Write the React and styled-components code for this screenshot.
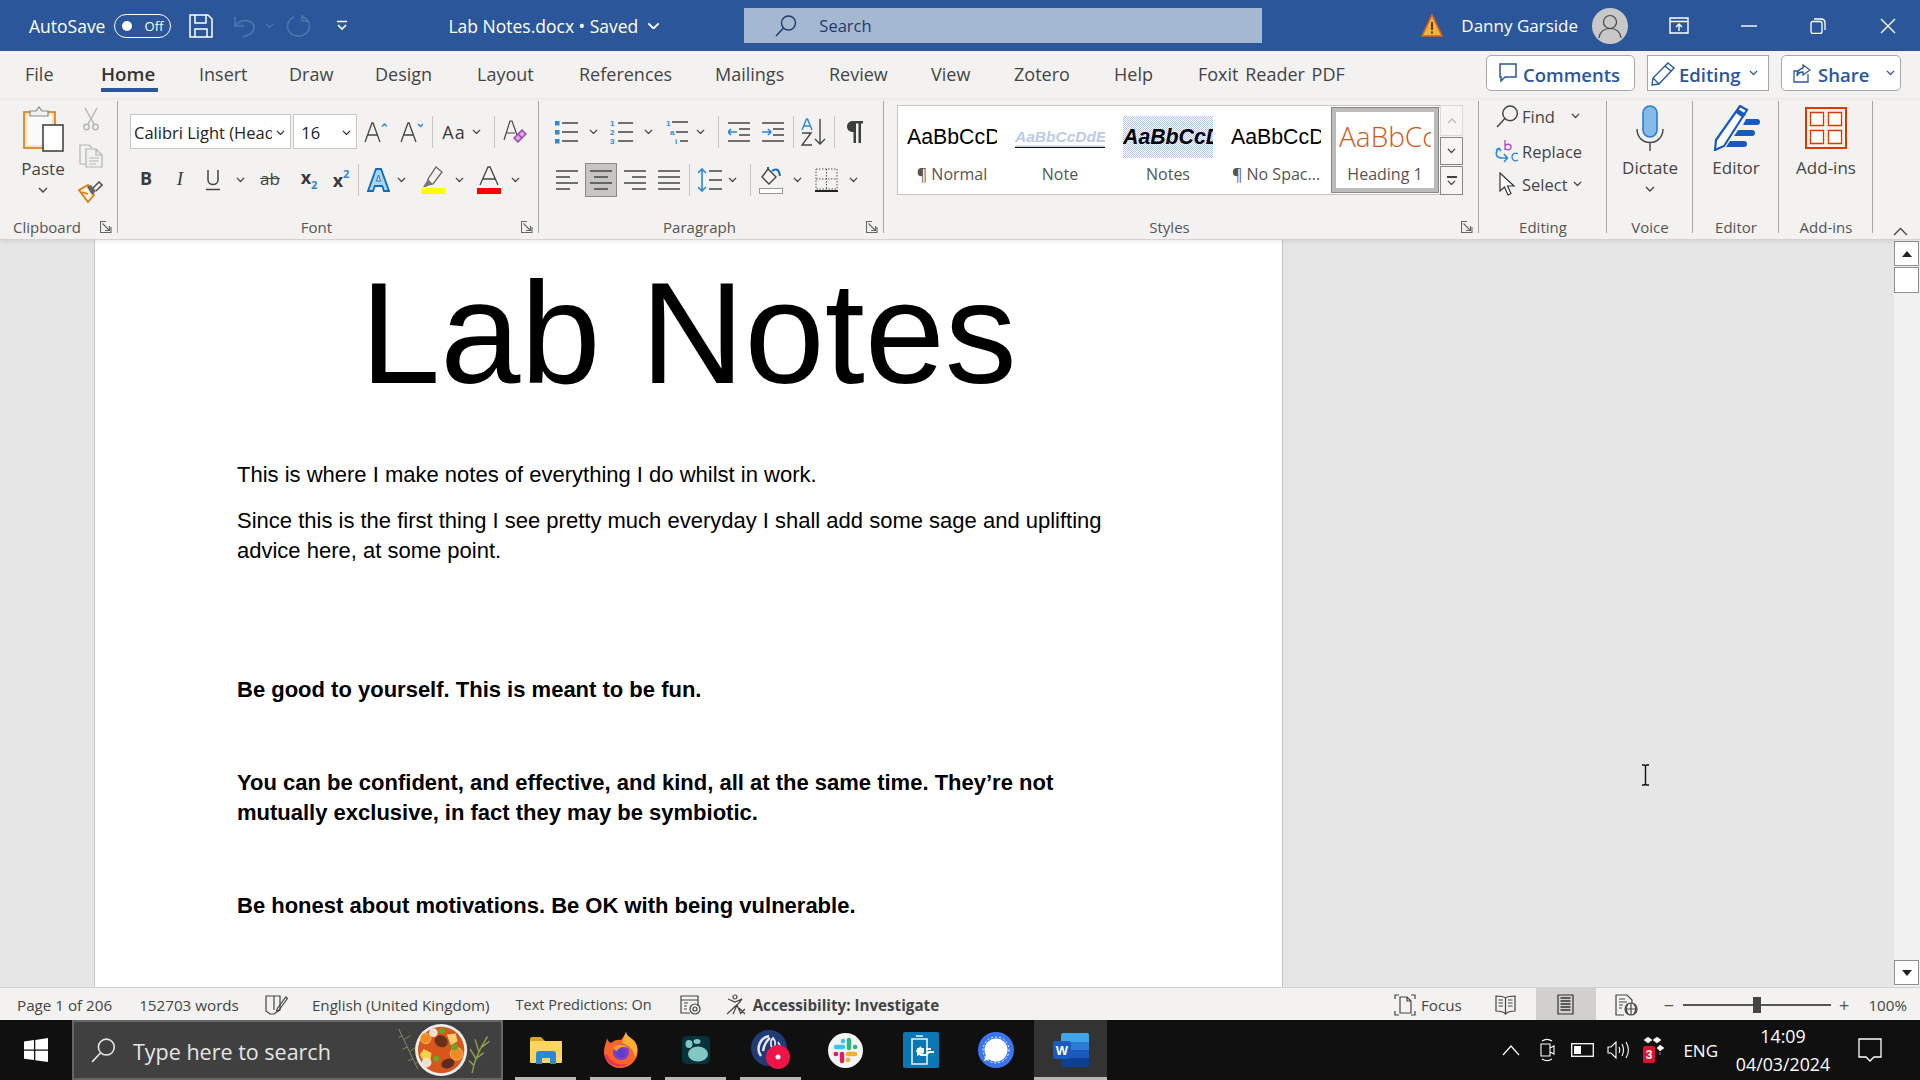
import React from "react";
import styled, { createGlobalStyle } from "styled-components";

const UI_FONT = `"Open Sans", "Noto Sans", sans-serif`;
const DOC_FONT = `"Liberation Sans", Arial, sans-serif`;
const BLUE = "#2b579a";
const INK = "#444";
const SKY = "#2b88d8";

const GlobalStyle = createGlobalStyle`
  html, body { margin: 0; padding: 0; height: 100%; overflow: hidden; }
  body { font-family: ${UI_FONT}; background: #101010; }
  svg { display: block; }
`;

/* ---------- icons ---------- */

const Chev = ({ c = "#444", w = 10 }) => (
  <svg width={w} height={w * 0.6} viewBox="0 0 10 6" fill="none" stroke={c} strokeWidth="1.4">
    <path d="M1 1l4 4 4-4" />
  </svg>
);

const SaveIcon = () => (
  <svg width="24" height="24" viewBox="0 0 24 24" fill="none" stroke="#fff" strokeWidth="1.5">
    <path d="M1 1h18l4 4v18H1z" />
    <path d="M6 1v8h11V1M6 23v-8h12v8" />
  </svg>
);
const UndoIcon = () => (
  <svg width="23" height="24" viewBox="0 0 23 24" fill="none" stroke="#4f76ad" strokeWidth="1.6">
    <path d="M2 3v9h9M2 12c6-8 19-7 19 2 0 4-4 7-11 9" />
  </svg>
);
const RedoIcon = () => (
  <svg width="25" height="24" viewBox="0 0 25 24" fill="none" stroke="#4f76ad" strokeWidth="1.6">
    <path d="M9 3a11 10 0 1 0 9 0M17 1v6h6" />
  </svg>
);
const QatIcon = () => (
  <svg width="12" height="11" viewBox="0 0 12 11" fill="none" stroke="#fff" strokeWidth="1.6">
    <path d="M1 1.5h10M2 5l4 4 4-4" />
  </svg>
);
const Magnifier = ({ c = "#1d3a6a", s = 22 }) => (
  <svg width={s} height={s} viewBox="0 0 22 22" fill="none" stroke={c} strokeWidth="1.4">
    <circle cx="13.5" cy="8" r="7" />
    <path d="M8.5 13L1 21" />
  </svg>
);
const WarnIcon = () => (
  <svg width="22" height="23" viewBox="0 0 22 23">
    <path d="M11 1l10 21H1z" fill="#f6b13c" stroke="#d9631e" strokeWidth="1.6" />
    <path d="M10 8h2v8h-2zM10 17.5h2v2h-2z" fill="#5a3a10" />
  </svg>
);
const AvatarIcon = () => (
  <svg width="36" height="36" viewBox="0 0 36 36" fill="none">
    <circle cx="18" cy="18" r="18" fill="#c8c8c8" />
    <circle cx="18" cy="14" r="6.5" stroke="#444" strokeWidth="1.2" />
    <path d="M7 30c1-7 5-9.5 11-9.5S28 23 29 30" stroke="#444" strokeWidth="1.2" />
  </svg>
);
const RibbonDisplayIcon = () => (
  <svg width="20" height="17" viewBox="0 0 20 17" fill="none" stroke="#fff" strokeWidth="1.4">
    <path d="M1 1h18v15H1zM1 4.5h18M10 14V7.5M7 10l3-3 3 3" />
  </svg>
);
const MinIcon = () => <svg width="16" height="2" viewBox="0 0 16 2"><path d="M0 1h16" stroke="#fff" strokeWidth="1.4" /></svg>;
const RestoreIcon = () => (
  <svg width="16" height="16" viewBox="0 0 16 16" fill="none" stroke="#fff" strokeWidth="1.3">
    <rect x="1" y="3.5" width="11" height="12" rx="2" />
    <path d="M4 1h7c3 0 4 1 4 4v7" />
  </svg>
);
const CloseIcon = () => (
  <svg width="16" height="16" viewBox="0 0 16 16" stroke="#fff" strokeWidth="1.4"><path d="M1 1l14 14M15 1L1 15" /></svg>
);
const CommentIcon = () => (
  <svg width="18" height="20" viewBox="0 0 18 20" fill="none" stroke={BLUE} strokeWidth="1.5">
    <path d="M1 1h16v13H6l-4 4v-4H1z" />
  </svg>
);
const PencilIcon = () => (
  <svg width="25" height="25" viewBox="0 0 25 25" fill="none" stroke={BLUE} strokeWidth="1.4">
    <path d="M17 2l6 5L8 23l-7 1 1-7zM14 5l6 5M2 17l6 6" />
  </svg>
);
const ShareIcon = () => (
  <svg width="18" height="20" viewBox="0 0 18 20" fill="none" stroke={BLUE} strokeWidth="1.3">
    <path d="M15 11v8H1V8h5M10 2l7 5-7 5V9c-3 0-5 1-6 4 0-5 2-7 6-8z" />
  </svg>
);

const PasteIcon = () => (
  <svg width="41" height="46" viewBox="0 0 41 46">
    <rect x="1" y="6" width="31" height="36" fill="#fbe6b8" stroke="#d97a17" strokeWidth="1.6" />
    <rect x="4" y="9" width="25" height="30" fill="#fafafa" />
    <path d="M7 10V5h6l3-4 3 4h6v5z" fill="#f3f2f1" stroke="#888" strokeWidth="1.2" />
    <rect x="20" y="19" width="20" height="26" fill="#fff" stroke="#444" strokeWidth="1.6" />
  </svg>
);
const CutIcon = () => (
  <svg width="16" height="24" viewBox="0 0 16 24" fill="none" stroke="#b3b3b3" strokeWidth="1.4">
    <path d="M2 1l9 16M14 1L5 17" />
    <circle cx="3.5" cy="20" r="2.7" />
    <circle cx="12.5" cy="20" r="2.7" />
  </svg>
);
const CopyIcon = () => (
  <svg width="24" height="24" viewBox="0 0 24 24" fill="none" stroke="#b3b3b3" strokeWidth="1.2">
    <path d="M7 20H1V1h9l3 3" />
    <path d="M7 5h10l6 6v12H7zM17 5v6h6M10 14h10M10 17h10M10 20h7" />
  </svg>
);
const PainterIcon = () => (
  <svg width="25" height="22" viewBox="0 0 25 22" fill="none">
    <path d="M1 9l9-5 6 10-6 7z" fill="#fff3dc" stroke="#d97a17" strokeWidth="1.8" />
    <path d="M9 6l5 8 4-4-5-6z" fill="#666" />
    <path d="M15 7l6-6 3 3-6 6" stroke="#555" strokeWidth="1.6" />
    <path d="M4 11l6 2" stroke="#d97a17" strokeWidth="1.4" />
  </svg>
);
const GrowIcon = ({ down }) => (
  <svg width="23" height="22" viewBox="0 0 23 22" fill="none">
    <path d="M1 21L8 2h1l7 19M4 14h10" stroke={INK} strokeWidth="1.3" />
    <path d={down ? "M18 3l2.5 2.5L23 3" : "M18 5.5L20.5 3 23 5.5"} stroke={SKY} strokeWidth="1.4" />
  </svg>
);
const ClearIcon = () => (
  <svg width="24" height="26" viewBox="0 0 24 26" fill="none">
    <path d="M1 21L7 2h2l5 14M4 14h8" stroke={INK} strokeWidth="1.2" />
    <path d="M11 19l8-8 4 4-8 8z" fill="#d6a6dc" stroke="#9c3fb0" strokeWidth="1.4" />
    <path d="M15 15l4 4" stroke="#9c3fb0" strokeWidth="1.2" />
  </svg>
);
const UnderlineGlyph = () => (
  <svg width="14" height="22" viewBox="0 0 14 22" fill="none" stroke={INK} strokeWidth="1.5">
    <path d="M2 1v10c0 6 10 6 10 0V1M0 20.5h14" />
  </svg>
);
const FillA = () => (
  <svg width="23" height="26" viewBox="0 0 23 26">
    <path d="M9 2h5l8 22h-5l-1.8-5H7.8L6 24H1z" fill="#a9d4f5" stroke="#0f6cbd" strokeWidth="1.8" />
    <path d="M11.5 8l-2 6h4z" fill="#fff" stroke="#0f6cbd" strokeWidth="1" />
  </svg>
);
const HighlightIcon = () => (
  <svg width="24" height="28" viewBox="0 0 24 28">
    <path d="M15 1l6 5-9 12-5 1 0-6z" fill="none" stroke="#666" strokeWidth="1.3" />
    <path d="M7 13l5 5-4 1-3 2H2z" fill="#777" />
    <rect x="0" y="22" width="24" height="6" fill="#ffff00" />
  </svg>
);
const ColorA = () => (
  <svg width="24" height="28" viewBox="0 0 24 28" fill="none">
    <path d="M3 19L11 1h2l8 18M6 13h12" stroke={INK} strokeWidth="1.3" />
    <rect x="0" y="22" width="24" height="6" fill="#f00" />
  </svg>
);
const BulletsIcon = () => (
  <svg width="23" height="24" viewBox="0 0 23 24">
    <path d="M7 3h16M7 12h16M7 21h16" stroke={INK} strokeWidth="1.5" />
    <path d="M0 1h4.5v4.5H0zM0 10h4.5v4.5H0zM0 19h4.5v4.5H0z" fill={SKY} />
  </svg>
);
const TinyBlue = styled.text`
  font: 700 8px ${DOC_FONT};
  fill: ${SKY};
`;
const NumberingIcon = () => (
  <svg width="23" height="26" viewBox="0 0 23 26">
    <path d="M8 4h15M8 13h15M8 22h15" stroke={INK} strokeWidth="1.5" />
    <TinyBlue x="0" y="7">1</TinyBlue>
    <TinyBlue x="0" y="16">2</TinyBlue>
    <TinyBlue x="0" y="25">3</TinyBlue>
  </svg>
);
const MultilevelIcon = () => (
  <svg width="23" height="26" viewBox="0 0 23 26">
    <path d="M6 3h16M10 13h12M14 22h8" stroke={INK} strokeWidth="1.5" />
    <TinyBlue x="0" y="7">1</TinyBlue>
    <TinyBlue x="4" y="16">a</TinyBlue>
    <TinyBlue x="9" y="25">i</TinyBlue>
  </svg>
);
const IndentIcon = ({ inc }) => (
  <svg width="22" height="22" viewBox="0 0 22 22" fill="none">
    <path d="M0 2h22M11 8h11M11 14h11M0 20h22" stroke={INK} strokeWidth="1.5" />
    <path d={inc ? "M0 11h9M6 8l3 3-3 3" : "M9 11H0M3 8l-3 3 3 3"} stroke={SKY} strokeWidth="1.6" />
  </svg>
);
const SortIcon = () => (
  <svg width="26" height="28" viewBox="0 0 26 28" fill="none">
    <path d="M1 12L5.5 1h1L11 12M3 8h6" stroke={SKY} strokeWidth="1.4" />
    <path d="M1 15h9L1 27h10" stroke={INK} strokeWidth="1.4" />
    <path d="M19 1v25M14 21l5 5 5-5" stroke={INK} strokeWidth="1.4" />
  </svg>
);
const PilcrowIcon = () => (
  <svg width="16" height="24" viewBox="0 0 16 24">
    <path d="M6 1h10v2.5h-2V23h-2.5V3.5H9V23H6.5V12C2 12 0 9.500 0 6.500S2 1 6 1z" fill="#3d3d3d" />
  </svg>
);
const AlignIcon = ({ kind }) => {
  const rows = {
    left: ["M0 2h22", "M0 8h14", "M0 14h22", "M0 20h14"],
    center: ["M0 2h22", "M4 8h14", "M0 14h22", "M4 20h14"],
    right: ["M0 2h22", "M8 8h14", "M0 14h22", "M8 20h14"],
    justify: ["M0 2h22", "M0 8h22", "M0 14h22", "M0 20h22"],
  }[kind];
  return (
    <svg width="22" height="22" viewBox="0 0 22 22" fill="none" stroke={INK} strokeWidth="1.5">
      <path d={rows.join("")} />
    </svg>
  );
};
const SpacingIcon = () => (
  <svg width="24" height="24" viewBox="0 0 24 24" fill="none">
    <path d="M4 1v22M0 5l4-4 4 4M0 19l4 4 4-4" stroke={SKY} strokeWidth="1.6" />
    <path d="M11 3h13M11 12h13M11 21h13" stroke={INK} strokeWidth="1.5" />
  </svg>
);
const ShadingIcon = () => (
  <svg width="24" height="28" viewBox="0 0 24 28" fill="none">
    <path d="M9 3l8 8-7 7-7-7z" stroke={INK} strokeWidth="1.4" />
    <path d="M9 3V1M13 5c4-3 7-2 8 5" stroke="#0f6cbd" strokeWidth="2" />
    <rect x="0.500" y="22.500" width="23" height="5" fill="#fff" stroke="#999" />
  </svg>
);
const BordersIcon = () => (
  <svg width="23" height="24" viewBox="0 0 23 24" fill="none">
    <path d="M1 1h21v20H1zM11.500 1v20M1 11h21" stroke="#555" strokeWidth="1" strokeDasharray="1.500 1.500" />
    <path d="M0 23h23" stroke="#222" strokeWidth="2" />
  </svg>
);
const LauncherIcon = () => (
  <svg width="12" height="12" viewBox="0 0 12 12" fill="none" stroke="#666" strokeWidth="1.1">
    <path d="M11 6v5.500H0.500V0.500H6M2.500 2.500l7 7M5 9.500h4.500V5" />
  </svg>
);
const ReplaceIcon = () => (
  <svg width="24" height="24" viewBox="0 0 24 24" fill="none">
    <path d="M4 9c-4 4-4 9 2 10h6M9 15l3.500 4L9 23M4 9l2 3M4 9L1 11" stroke={SKY} strokeWidth="1.5" />
    <path d="M10 1v10M10 7c2-3 6-2 6 1s-4 4-6 1" stroke="#b146c2" strokeWidth="1.3" />
    <path d="M23 15c-3-2-6 0-6 3s3 5 6 3" stroke={SKY} strokeWidth="1.4" />
  </svg>
);
const CursorIcon = () => (
  <svg width="17" height="24" viewBox="0 0 17 24">
    <path d="M1 1l0 18 4.500-4 3.500 8 3-1.500-3.500-7.500H15z" fill="#fff" stroke="#333" strokeWidth="1.2" />
  </svg>
);
const MicIcon = () => (
  <svg width="28" height="46" viewBox="0 0 28 46" fill="none">
    <rect x="7" y="1" width="14" height="31" rx="7" fill="#84bbe9" stroke="#2b7cd3" strokeWidth="1.6" />
    <path d="M1 24c0 18 26 18 26 0M14 37v9" stroke="#444" strokeWidth="1.4" />
  </svg>
);
const EditorIcon = () => (
  <svg width="47" height="46" viewBox="0 0 47 46">
    <path d="M27 1l7 4-23 36-9 4 1-10z" fill="#fff" stroke="#185abd" strokeWidth="2.2" />
    <path d="M25 4l8 5-3 4-7-5z" fill="#185abd" />
    <path d="M33 14h11a3 3 0 0 1 0 6H30zM25 25h14a3 3 0 0 1 0 6H21zM17 36h14a3 3 0 0 1 0 6H13z" fill="#185abd" />
  </svg>
);
const AddinsIcon = () => (
  <svg width="42" height="42" viewBox="0 0 42 42" fill="none">
    <rect x="1" y="1" width="40" height="40" fill="#fdf1ec" stroke="#d83b01" strokeWidth="2" />
    <path d="M5.500 5.500h13v13h-13zM23.500 5.500h13v13h-13zM5.500 23.500h13v13h-13zM23.500 23.500h13v13h-13z" fill="#fff" stroke="#d83b01" strokeWidth="1.3" />
  </svg>
);
const CaretUp = () => (
  <svg width="15" height="9" viewBox="0 0 15 9" fill="none" stroke="#444" strokeWidth="1.3"><path d="M1 8l6.500-6.500L14 8" /></svg>
);
const IBeam = () => (
  <svg width="9" height="22" viewBox="0 0 9 22" fill="none" stroke="#111" strokeWidth="1.4">
    <path d="M1 1h2.500l1 1 1-1H8M4.500 2v18M1 21h2.500l1-1 1 1H8" />
  </svg>
);

const ProofIcon = () => (
  <svg width="23" height="20" viewBox="0 0 23 20" fill="none" stroke="#444" strokeWidth="1.2">
    <path d="M1 1h14v14l-6 4H5l-4-3zM9 1v14" />
    <path d="M21 2l1.500 1.500L14 15l-2.500 1 .8-2.500z" />
  </svg>
);
const PredictIcon = () => (
  <svg width="23" height="20" viewBox="0 0 23 20" fill="none" stroke="#444" strokeWidth="1.2">
    <path d="M19 11V1H2v17h9M2 5h17M5 8h4M5 11h3M5 14h3" />
    <circle cx="16" cy="14" r="5" />
    <circle cx="16" cy="14" r="2" />
  </svg>
);
const AccessIcon = () => (
  <svg width="21" height="21" viewBox="0 0 21 21" fill="none" stroke="#444" strokeWidth="1.2">
    <circle cx="9" cy="3" r="2" />
    <path d="M2 5l7 3 7-3-5 6 4 9M11 11l-4 9M1 20L14 8M13 14l6 6M19 15l-5 5" />
  </svg>
);
const FocusIcon = () => (
  <svg width="22" height="22" viewBox="0 0 22 22" fill="none" stroke="#444" strokeWidth="1.2">
    <path d="M1 5V1h4M17 1h4v4M21 17v4h-4M5 21H1v-4M6 3h7l4 4v12H6zM13 3v4h4" />
  </svg>
);
const ReadIcon = () => (
  <svg width="21" height="20" viewBox="0 0 21 20" fill="none" stroke="#444" strokeWidth="1.2">
    <path d="M10.500 3C8 1 4 1 1 1v15c3 0 7 0 9.500 3 2.500-3 6.500-3 9.500-3V1c-3 0-7 0-9.500 2zM10.500 3v16M3.500 5h4.500M3.500 8h4.500M3.500 11h4.500M13 5h4.500M13 8h4.500M13 11h4.500" />
  </svg>
);
const PrintIcon = () => (
  <svg width="17" height="21" viewBox="0 0 17 21" fill="none" stroke="#333" strokeWidth="1.2">
    <path d="M1 1h15v19H1z" />
    <path d="M3.500 4h10M3.500 7h10M3.500 10h10M3.500 13h10M3.500 16h10" strokeWidth="1.5" />
  </svg>
);
const WebIcon = () => (
  <svg width="23" height="22" viewBox="0 0 23 22" fill="none" stroke="#444" strokeWidth="1.2">
    <path d="M9 21H1V1h11l5 5v3M4 5h6M4 8h8M4 11h4M4 14h3" />
    <circle cx="16" cy="15" r="6" />
    <path d="M10 15h12M16 9v12M13 10c-2 3-2 7 0 10M19 10c2 3 2 7 0 10" />
  </svg>
);

/* taskbar drawings */
const WindowsLogo = () => (
  <svg width="24" height="24" viewBox="0 0 24 24" fill="#fff">
    <path d="M0 3.500l10-1.400V11.500H0zM11.300 1.900L24 0v11.500H11.300zM0 12.800h10v9.300L0 20.700zM11.300 12.800H24V24l-12.700-1.800z" />
  </svg>
);
const StewArt = () => (
  <svg width="100" height="56" viewBox="0 0 100 58" fill="none">
    <g stroke="#8a8a5e" strokeWidth="1">
      <path d="M2 7l20 42M6 14l-4 2M8 18l6-4M11 26l-5 2M14 30l6-4M17 38l-5 2M19 43l6-3" />
    </g>
    <g stroke="#9aa24c" strokeWidth="1.400">
      <path d="M78 53c2-12 6-22 16-38M82 38l-6-10M82 38l8-6M85 30l-4-12M88 26l8-6M80 45l-5-5" />
    </g>
    <circle cx="46" cy="29" r="27" fill="#eee" />
    <circle cx="46" cy="29" r="24" fill="#d6561b" />
    <ellipse cx="46" cy="20" rx="7" ry="6" fill="#6b2d1e" transform="rotate(30 46 20)" />
    <ellipse cx="53" cy="43" rx="7" ry="5" fill="#5c2a20" transform="rotate(-20 53 43)" />
    <circle cx="30" cy="17" r="5.500" fill="#f08a24" stroke="#f7b55e" />
    <circle cx="62" cy="33" r="6.500" fill="#f08a24" stroke="#f7b55e" />
    <path d="M28 28l8 4-1 7-8 0-3-5z" fill="#f6d24c" />
    <path d="M52 13l9-1 2 8-7 4z" fill="#f4cf70" />
    <circle cx="38" cy="11" r="4.500" fill="#ece2d2" />
    <circle cx="31" cy="42" r="5" fill="#ece2d2" />
    <circle cx="47" cy="9" r="3" fill="#6da52b" />
    <circle cx="60" cy="26" r="3.500" fill="#6da52b" />
    <circle cx="41" cy="38" r="3" fill="#6da52b" />
  </svg>
);
const ExplorerIcon = () => (
  <svg width="32" height="27" viewBox="0 0 32 27">
    <path d="M0 2a2 2 0 0 1 2-2h9l4 4h17v3H0z" fill="#d9a520" />
    <rect x="0" y="4" width="32" height="22" rx="1" fill="#fbd55e" />
    <path d="M6 27V17a3 3 0 0 1 3-3h14a3 3 0 0 1 3 3v10h-6v-6h-8v6z" fill="#2b88d8" />
  </svg>
);
const FirefoxIcon = () => (
  <svg width="34" height="36" viewBox="0 0 34 36">
    <path d="M22 0c1 5 5 5 9 10 4 6 3 14 0 18-4 6-10 8-15 8C7 36 0 29 0 20 0 14 3 9 3 6c1 3 2 4 4 5 3-3 8-4 10-3 2-3 4-5 5-8z" fill="#f8642a" />
    <path d="M22 0c1 5 5 5 9 10 4 6 2 12 0 16-1-8-6-13-13-15 1-5 3-8 4-11z" fill="#fbb030" />
    <path d="M3 22c3 9 13 13 22 9-8 7-21 3-24-7z" fill="#f02e54" />
    <circle cx="17" cy="20" r="8" fill="#7b3ed1" />
    <path d="M9 16c3-4 11-5 15 0-5-2-9-1-10 3-2 0-4-1-5-3z" fill="#f89a2c" />
    <circle cx="17" cy="21" r="4.500" fill="#5a3fc9" />
  </svg>
);
const DarkAppIcon = () => (
  <svg width="28" height="28" viewBox="0 0 28 28">
    <rect width="28" height="28" rx="5" fill="#07323a" />
    <ellipse cx="7" cy="8" rx="3.500" ry="4" fill="#82c8c2" />
    <ellipse cx="15" cy="5.500" rx="3.500" ry="2.500" fill="#82c8c2" />
    <ellipse cx="16" cy="18" rx="10" ry="7.500" fill="#82c8c2" />
  </svg>
);
const ClockApp = () => (
  <svg width="40" height="40" viewBox="0 0 40 40" fill="none">
    <circle cx="18" cy="18" r="18" fill="#223a75" />
    <path d="M18 6C8 8 5 20 10 26M12 21C13 15 15 11 19 8" stroke="#dfe6f2" strokeWidth="2.500" />
    <path d="M22 8c3 3 3 8 0 10-3-2-3-7 0-10zM27 12c2 3 3 6 2 9" stroke="#dfe6f2" strokeWidth="1.800" />
    <circle cx="27" cy="27" r="12" fill="#f01446" />
    <circle cx="27" cy="27" r="2.500" fill="#fff" />
  </svg>
);
const SlackIcon = () => (
  <svg width="35" height="35" viewBox="0 0 35 35">
    <circle cx="17.500" cy="17.500" r="17.500" fill="#f4f4f4" />
    <g strokeWidth="4.400" strokeLinecap="round" fill="none">
      <path d="M8 14h7M15 8v.2" stroke="#36c5f0" />
      <path d="M21 7v8M27 14h.2" stroke="#2eb67d" />
      <path d="M27 21h-7M20 27v-.2" stroke="#ecb22e" />
      <path d="M14 28v-7M8 21h-.2" stroke="#e01e5a" />
    </g>
  </svg>
);
const BatteryApp = () => (
  <svg width="36" height="36" viewBox="0 0 36 36" fill="none">
    <rect width="36" height="36" rx="2" fill="#0a77b5" />
    <path d="M13 4h7M9 7h15v25H9z" stroke="#e8f2f8" strokeWidth="1.600" />
    <path d="M14 16h7v5l-7 3z" fill="#e8f2f8" />
    <path d="M18 15l-4 4 4 4h5l3-3h5M23 17h5M23 21h3" stroke="#fff" strokeWidth="1.800" />
  </svg>
);
const SignalIcon = () => (
  <svg width="36" height="36" viewBox="0 0 36 36">
    <circle cx="18" cy="18" r="18" fill="#3a76f0" />
    <circle cx="18" cy="18" r="11.500" fill="#fff" />
    <circle cx="18" cy="18" r="13" fill="none" stroke="#fff" strokeWidth="1" strokeDasharray="2 2" />
    <path d="M8 23l-2 6 6-2z" fill="#fff" />
  </svg>
);
const WordLetter = styled.text`
  font: 700 13px ${DOC_FONT};
  fill: #fff;
`;
const WordIcon = () => (
  <svg width="36" height="34" viewBox="0 0 36 34">
    <path d="M8 2a2 2 0 0 1 2-2h24a2 2 0 0 1 2 2v7H8z" fill="#41a5ee" />
    <rect x="8" y="9" width="28" height="8" fill="#2b7cd3" />
    <rect x="8" y="17" width="28" height="8" fill="#185abd" />
    <path d="M8 25h28v7a2 2 0 0 1-2 2H10a2 2 0 0 1-2-2z" fill="#103f91" />
    <rect y="8" width="18" height="18" rx="2" fill="#185abd" />
    <WordLetter x="9" y="22" textAnchor="middle">W</WordLetter>
  </svg>
);
const TrayCam = () => (
  <svg width="15" height="24" viewBox="0 0 15 24" fill="none" stroke="#fff" strokeWidth="1.1">
    <path d="M2 3c3-2 7-2 10 0M2 21c3 2 7 2 10 0M1 6h9v12H1zM10 10l4-2v8l-4-2" />
  </svg>
);
const TrayBattery = () => (
  <svg width="23" height="14" viewBox="0 0 23 14">
    <rect x="0.700" y="0.700" width="21.600" height="12.600" fill="none" stroke="#fff" strokeWidth="1.300" />
    <rect x="3" y="3" width="7" height="8" fill="#fff" />
  </svg>
);
const TraySpeaker = () => (
  <svg width="23" height="20" viewBox="0 0 23 20" fill="none" stroke="#fff" strokeWidth="1.100">
    <path d="M1 7h3l5-5v16l-5-5H1zM12 7c1 2 1 4 0 6M15 4c2 4 2 8 0 12M19 2c3 5 3 11 0 16" />
  </svg>
);
const BadgeDigit = styled.text`
  font: 700 12px ${DOC_FONT};
  fill: #fff;
`;
const TrayBox = () => (
  <svg width="22" height="26" viewBox="0 0 22 26">
    <path d="M5 0l4 3-4 3-4-3zM14 0l4 3-4 3-4-3zM17 8l4 3-4 3-3-3zM17 15v3" fill="#fff" stroke="#fff" strokeWidth="0.500" />
    <rect x="0" y="9" width="12" height="17" rx="2" fill="#e0102f" />
    <BadgeDigit x="6" y="22" textAnchor="middle">3</BadgeDigit>
  </svg>
);
const NotifyIcon = () => (
  <svg width="24" height="24" viewBox="0 0 24 24" fill="none" stroke="#fff" strokeWidth="1.300">
    <path d="M1 1h22v18h-7l-4 4-4-4H1z" />
  </svg>
);

/* ---------- layout ---------- */

const Screen = styled.div`
  width: 1920px;
  height: 1080px;
  display: flex;
  flex-direction: column;
  overflow: hidden;
  font-family: ${UI_FONT};
`;

const TitleBar = styled.header`
  flex: 0 0 51px;
  display: flex;
  align-items: center;
  background: ${BLUE};
  color: #fff;
  font-size: 17.500px;
  padding-left: 29px;
`;
const TitleText = styled.span`
  margin-left: ${(p) => p.$ml || 0}px;
  white-space: nowrap;
  ${(p) => p.$size && `font-size: ${p.$size}px;`}
`;
const TitleIcon = styled.span`
  display: flex;
  margin-left: ${(p) => p.$ml || 0}px;
`;
const Toggle = styled.span`
  display: flex;
  align-items: center;
  justify-content: space-between;
  box-sizing: border-box;
  width: 57px;
  height: 24px;
  margin-left: 9px;
  padding: 0 7px 0 7px;
  border: 1.500px solid #fff;
  border-radius: 12px;
  font-size: 13px;
  &::before {
    content: "";
    width: 10px;
    height: 10px;
    border-radius: 50%;
    background: #fff;
  }
`;
const SearchBox = styled.div`
  flex: 0 0 518px;
  height: 35px;
  margin-left: ${(p) => p.$ml}px;
  display: flex;
  align-items: center;
  gap: 22px;
  padding-left: 31px;
  box-sizing: border-box;
  background: #a5b8d1;
  color: #1d3a6a;
  font-size: 16.500px;
`;

const TabBar = styled.nav`
  flex: 0 0 49px;
  display: flex;
  align-items: flex-start;
  background: #f3f2f1;
  padding-left: 25px;
  position: relative;
`;
const Tab = styled.div`
  flex: 0 0 ${(p) => p.$w}px;
  height: 42px;
  line-height: 47px;
  font-size: 18px;
  word-spacing: 2px;
  white-space: nowrap;
  color: #444;
  ${(p) =>
    p.$active &&
    `
    font-weight: 600;
    font-size: 18.800px;
    color: #333;
    box-sizing: border-box;
    height: 42px;
    position: relative;
    &::after {
      content: "";
      position: absolute;
      left: 0;
      top: 37px;
      width: 57px;
      height: 4px;
      background: ${BLUE};
    }
  `}
`;
const TabActions = styled.div`
  position: absolute;
  right: 19px;
  top: 4px;
  display: flex;
  gap: 12px;
`;
const ActionButton = styled.div`
  box-sizing: border-box;
  width: ${(p) => p.$w}px;
  height: 36px;
  display: flex;
  align-items: center;
  padding-left: ${(p) => p.$pl}px;
  gap: ${(p) => p.$gap}px;
  background: #fff;
  border: 1px solid #a8a8a8;
  border-radius: ${(p) => (p.$square ? 0 : 5)}px;
  color: ${BLUE};
  font-size: 18.500px;
  font-weight: 600;
`;
const ActionText = styled.span`
  position: relative;
  top: 1px;
`;

const Ribbon = styled.section`
  flex: 0 0 140px;
  display: flex;
  background: #f3f2f1;
  box-sizing: border-box;
  padding-top: 1px;
  border-bottom: 1px solid #d5d3d1;
  position: relative;
  z-index: 2;
  box-shadow: 0 1px 5px rgba(0, 0, 0, 0.1);
`;
const Group = styled.div`
  flex: 0 0 ${(p) => p.$w}px;
  display: flex;
  flex-direction: column;
  position: relative;
  &::after {
    content: "";
    position: absolute;
    right: 0;
    top: 0;
    height: 132px;
    width: 1px;
    background: #a6a6a6;
  }
`;
const GroupBody = styled.div`
  flex: 1;
  display: flex;
  min-height: 0;
  padding-left: ${(p) => p.$pl || 0}px;
  padding-top: ${(p) => p.$pt || 0}px;
  flex-direction: ${(p) => (p.$col ? "column" : "row")};
  gap: ${(p) => p.$gap || 0}px;
`;
const LabelRow = styled.div`
  flex: 0 0 22px;
  display: flex;
  align-items: center;
  margin-bottom: 1px;
`;
const GroupLabel = styled.span`
  flex: 1;
  text-align: center;
  font-size: 15px;
  color: #555;
`;
const Launcher = styled.span`
  flex: 0 0 24px;
  display: flex;
  justify-content: center;
`;

const LargeButton = styled.div`
  flex: 0 0 ${(p) => p.$w}px;
  min-width: 0;
  margin-left: ${(p) => p.$ml || 0}px;
  padding-top: ${(p) => p.$pt ?? 5}px;
  display: flex;
  flex-direction: column;
  align-items: center;
`;
const LargeLabel = styled.span`
  margin-top: ${(p) => p.$mt ?? 6}px;
  line-height: 22px;
  font-size: 17px;
  color: #444;
  white-space: nowrap;
`;
const DropHint = styled.span`
  margin-top: 7px;
  display: block;
`;
const SmallStack = styled.div`
  display: flex;
  flex-direction: column;
  align-items: center;
  width: 25px;
  margin-left: 15px;
  padding-top: 6px;
  gap: 13px;
`;

const ToolRow = styled.div`
  display: flex;
  align-items: center;
  height: ${(p) => p.$h}px;
`;
const Tool = styled.span`
  flex: 0 0 ${(p) => p.$w}px;
  margin-left: ${(p) => p.$ml || 0}px;
  height: 100%;
  display: flex;
  align-items: center;
  justify-content: center;
  color: #3b3b3b;
  ${(p) =>
    p.$active &&
    `
    background: #c8c6c4;
    border: 1px solid #8a8a8a;
    box-sizing: border-box;
  `}
`;
const Divider = styled.span`
  flex: 0 0 1px;
  margin-left: ${(p) => p.$ml}px;
  height: 32px;
  background: #c8c6c4;
`;
const ComboBox = styled.div`
  flex: 0 0 ${(p) => p.$w}px;
  margin-left: ${(p) => p.$ml || 0}px;
  box-sizing: border-box;
  height: 35px;
  display: flex;
  align-items: center;
  justify-content: space-between;
  padding: 2px 5px 0 3px;
  background: #fff;
  border: 1px solid #c8c6c4;
  font-size: 16.500px;
  color: #222;
  overflow: hidden;
`;
const ComboText = styled.span`
  white-space: nowrap;
  overflow: hidden;
  width: ${(p) => p.$w}px;
`;
const LetterBold = styled.span`
  font: 700 18px ${UI_FONT};
  color: #3b3b3b;
  padding-bottom: 4px;
`;
const LetterItalic = styled.span`
  font: italic 400 19px "Liberation Serif", serif;
  color: #3b3b3b;
  padding-bottom: 3px;
`;
const ChangeCase = styled.span`
  font-size: 18px;
  letter-spacing: 1px;
  color: #3b3b3b;
`;
const StrikeText = styled.span`
  font-size: 17px;
  color: #444;
  padding-bottom: 3px;
  text-decoration: line-through;
`;
const ScriptBase = styled.span`
  font: 700 18px ${UI_FONT};
  color: #3b3b3b;
  padding-bottom: 3px;
`;
const ScriptMark = styled.sub`
  font: 700 11px ${UI_FONT};
  color: ${SKY};
  vertical-align: ${(p) => (p.$up ? "9px" : "-5px")};
`;

const Gallery = styled.div`
  width: 566px;
  height: 90px;
  margin-left: 13px;
  display: flex;
  box-sizing: border-box;
`;
const GalleryItems = styled.div`
  flex: 0 0 543px;
  display: flex;
  box-sizing: border-box;
  background: #fff;
  border: 1px solid #c8c6c4;
  border-right: none;
`;
const StyleCell = styled.div`
  flex: 0 0 108px;
  box-sizing: border-box;
  display: flex;
  flex-direction: column;
  align-items: center;
  padding-top: ${(p) => (p.$selected ? 3 : 10)}px;
  ${(p) => p.$selected && "border: 5px solid #bdbbb9; outline: 1px solid #8a8886; outline-offset: -1px; margin-left: 1px; height: 86px; margin-top: 1px;"}
`;
const StylePreview = styled.div`
  width: ${(p) => (p.$selected ? 92 : 90)}px;
  height: 42px;
  overflow: hidden;
  display: flex;
  align-items: center;
  white-space: nowrap;
  font-family: ${DOC_FONT};
  font-size: 21.300px;
  color: #000;
`;
const NotesPreview = styled(StylePreview)`
  font-weight: 700;
  font-style: italic;
  background: repeating-conic-gradient(#b4c7e7 0 25%, #fff 0 50%) 0 0 / 2px 2px;
`;
const NotePreviewText = styled.span`
  font-size: 15.500px;
  font-style: italic;
  font-weight: 700;
  color: #bccbe8;
  line-height: 20px;
  border-bottom: 1.500px solid #111;
  box-shadow: inset 0 -1.500px 0 #bccbe8;
`;
const HeadingPreview = styled(StylePreview)`
  font-family: "Open Sans", sans-serif;
  font-weight: 300;
  font-size: 28px;
  color: #d0591a;
`;
const StyleName = styled.span`
  margin-top: ${(p) => (p.$selected ? 5 : 4)}px;
  line-height: 24px;
  font-size: 16px;
  color: #555;
  white-space: nowrap;
`;
const GalleryScroll = styled.div`
  flex: 0 0 23px;
  display: flex;
  flex-direction: column;
`;
const ScrollStep = styled.div`
  flex: 0 0 ${(p) => p.$h}px;
  box-sizing: border-box;
  display: flex;
  align-items: center;
  justify-content: center;
  border: 1px solid ${(p) => (p.$off ? "#dcdad8" : "#8a8886")};
  margin-top: ${(p) => (p.$off ? 0 : 1)}px;
  background: #f6f5f4;
`;
const MoreGlyph = styled.span`
  display: flex;
  flex-direction: column;
  align-items: center;
  gap: 2px;
  &::before {
    content: "";
    width: 10px;
    height: 1.500px;
    background: #444;
  }
`;

const EditRow = styled.div`
  height: 30px;
  margin-top: ${(p) => p.$mt || 0}px;
  display: flex;
  align-items: center;
  font-size: 16.500px;
  color: #444;
`;
const EditIcon = styled.span`
  flex: 0 0 28px;
  display: flex;
  justify-content: center;
  margin-right: 1px;
`;
const EditChev = styled.span`
  margin-left: ${(p) => p.$ml}px;
`;

const Collapse = styled.div`
  flex: 1;
  display: flex;
  justify-content: center;
  padding-top: 126px;
  padding-left: 8px;
`;

const Workspace = styled.main`
  flex: 1;
  min-height: 0;
  display: flex;
  position: relative;
  background: #e6e6e6;
`;
const DocArea = styled.div`
  flex: 1;
  min-width: 0;
  padding-left: 94px;
  overflow: hidden;
`;
const Page = styled.article`
  box-sizing: border-box;
  width: 1189px;
  height: 100%;
  padding: 11px 160px 0 142px;
  background: #fff;
  border-left: 1px solid #c8c6c4;
  border-right: 1px solid #c8c6c4;
  color: #000;
  font-family: ${DOC_FONT};
  overflow: hidden;
`;
const DocTitle = styled.h1`
  margin: 0 -160px 0 -142px;
  font-size: 144px;
  font-weight: 400;
  line-height: 166px;
  text-align: center;
  white-space: nowrap;
`;
const DocPara = styled.p`
  margin: ${(p) => p.$mt}px 0 0;
  font-size: 22px;
  line-height: 30px;
  font-weight: ${(p) => (p.$bold ? 700 : 400)};
`;
const Scrollbar = styled.aside`
  flex: 0 0 26px;
  box-sizing: border-box;
  display: flex;
  flex-direction: column;
  padding: 1px 1px 2px 0;
  background: #f0f0f0;
`;
const ScrollButton = styled.div`
  flex: 0 0 ${(p) => p.$h}px;
  box-sizing: border-box;
  display: flex;
  align-items: center;
  justify-content: center;
  background: #fff;
  border: 1px solid #8f8f8f;
  margin-top: ${(p) => p.$mt || 0}px;
`;
const Triangle = styled.span`
  width: 0;
  height: 0;
  border-left: 5.500px solid transparent;
  border-right: 5.500px solid transparent;
  ${(p) => (p.$down ? "border-top: 6px solid #222;" : "border-bottom: 6px solid #222;")}
`;
const TrackFill = styled.div`
  flex: 1;
`;
const TextCursor = styled.span`
  position: absolute;
  left: 1641px;
  top: 524px;
`;

const StatusBar = styled.footer`
  flex: 0 0 33px;
  box-sizing: border-box;
  display: flex;
  align-items: center;
  background: #f3f2f1;
  border-top: 1px solid #d2d0ce;
  font-size: 15.200px;
  color: #444;
  padding: 1px 0 0 17px;
`;
const StatusText = styled.span`
  margin-left: ${(p) => p.$ml || 0}px;
  white-space: nowrap;
  font-weight: ${(p) => (p.$bold ? 700 : 400)};
  ${(p) => p.$size && `font-size: ${p.$size}px;`}
`;
const StatusIcon = styled.span`
  display: flex;
  margin-left: ${(p) => p.$ml || 0}px;
`;
const StatusRight = styled.div`
  margin-left: auto;
  align-self: stretch;
  display: flex;
  align-items: center;
  padding-right: 13px;
`;
const ViewButton = styled.span`
  flex: 0 0 60px;
  align-self: stretch;
  margin: -1px 0 0 20px;
  padding-top: 1px;
  display: flex;
  align-items: center;
  justify-content: center;
  background: #d2d0ce;
`;
const ZoomSign = styled.span`
  margin-left: ${(p) => p.$ml}px;
  font-size: 18px;
  line-height: 18px;
  color: #555;
`;
const ZoomTrack = styled.span`
  display: flex;
  justify-content: center;
  position: relative;
  width: 148px;
  height: 2px;
  margin-left: 9px;
  background: #555;
`;
const ZoomThumb = styled.span`
  position: absolute;
  top: -7px;
  width: 8px;
  height: 16px;
  background: #444;
`;

const Taskbar = styled.div`
  flex: 0 0 60px;
  min-height: 0;
  overflow: hidden;
  display: flex;
  align-items: stretch;
  background: #101010;
  color: #fff;
`;
const StartButton = styled.div`
  flex: 0 0 72px;
  display: flex;
  align-items: center;
  justify-content: center;
`;
const TaskSearch = styled.div`
  flex: 0 0 431px;
  box-sizing: border-box;
  display: flex;
  align-items: center;
  padding-left: 17px;
  background: #404040;
  border: 2px solid #666;
  font-size: 21.500px;
  color: #e6e6e6;
  overflow: hidden;
`;
const TaskSearchText = styled.span`
  margin: 3px 0 0 17px;
  white-space: nowrap;
`;
const SearchArt = styled.span`
  margin-left: auto;
  margin-right: 6px;
`;
const TaskIcons = styled.div`
  display: flex;
  padding-left: 5px;
`;
const TaskItem = styled.div`
  flex: 0 0 ${(p) => (p.$active ? 73 : 75)}px;
  margin-left: ${(p) => p.$ml || 0}px;
  position: relative;
  display: flex;
  align-items: center;
  justify-content: center;
  background: ${(p) => (p.$active ? "#333" : "transparent")};
  ${(p) =>
    p.$running &&
    `
    &::after {
      content: "";
      position: absolute;
      bottom: 0;
      left: ${p.$active ? 0 : 7}px;
      right: ${p.$active ? 0 : 7}px;
      height: 3px;
      background: #b8b8b8;
    }
  `}
`;
const Tray = styled.div`
  margin-left: auto;
  display: flex;
  align-items: center;
  padding-right: 38px;
`;
const TrayItem = styled.span`
  display: flex;
  margin-left: ${(p) => p.$ml}px;
`;
const TrayLang = styled.span`
  margin-left: ${(p) => p.$ml}px;
  font-size: 17px;
`;
const Clock = styled.div`
  margin-left: 11px;
  width: 108px;
  display: flex;
  flex-direction: column;
  align-items: center;
  font-size: 17.800px;
  line-height: 28px;
`;

const tabs = [
  ["File", 76],
  ["Home", 98, true],
  ["Insert", 90],
  ["Draw", 86],
  ["Design", 102],
  ["Layout", 102],
  ["References", 136],
  ["Mailings", 114],
  ["Review", 102],
  ["View", 83],
  ["Zotero", 100],
  ["Help", 84],
  ["Foxit Reader PDF", 160],
];

const Label = ({ children, launcher }) => (
  <LabelRow>
    <GroupLabel>{children}</GroupLabel>
    {launcher && (
      <Launcher>
        <LauncherIcon />
      </Launcher>
    )}
  </LabelRow>
);

function App() {
  return (
    <Screen>
      <GlobalStyle />
      <TitleBar>
        <TitleText>AutoSave</TitleText>
        <Toggle>Off</Toggle>
        <TitleIcon $ml={18}><SaveIcon /></TitleIcon>
        <TitleIcon $ml={20}><UndoIcon /></TitleIcon>
        <TitleIcon $ml={9}><Chev c="#4f76ad" w={9} /></TitleIcon>
        <TitleIcon $ml={11}><RedoIcon /></TitleIcon>
        <TitleIcon $ml={26}><QatIcon /></TitleIcon>
        <TitleText $ml={100}>Lab Notes.docx • Saved</TitleText>
        <TitleIcon $ml={9}><Chev c="#fff" w={13} /></TitleIcon>
        <SearchBox $ml={84}>
          <Magnifier />
          <span>Search</span>
        </SearchBox>
        <TitleIcon $ml={159}><WarnIcon /></TitleIcon>
        <TitleText $ml={18} $size={17}>Danny Garside</TitleText>
        <TitleIcon $ml={14}><AvatarIcon /></TitleIcon>
        <TitleIcon $ml={41}><RibbonDisplayIcon /></TitleIcon>
        <TitleIcon $ml={52}><MinIcon /></TitleIcon>
        <TitleIcon $ml={53}><RestoreIcon /></TitleIcon>
        <TitleIcon $ml={54}><CloseIcon /></TitleIcon>
      </TitleBar>

      <TabBar>
        {tabs.map(([name, w, active]) => (
          <Tab key={name} $w={w} $active={active}>{name}</Tab>
        ))}
        <TabActions>
          <ActionButton $w={149} $pl={12} $gap={6}><CommentIcon /><ActionText>Comments</ActionText></ActionButton>
          <ActionButton $w={122} $pl={3} $gap={3} $square><PencilIcon /><ActionText>Editing</ActionText><TitleIcon $ml={6}><Chev c={BLUE} w={9} /></TitleIcon></ActionButton>
          <ActionButton $w={120} $pl={11} $gap={7}><ShareIcon /><ActionText>Share</ActionText><TitleIcon $ml={10}><Chev c={BLUE} w={9} /></TitleIcon></ActionButton>
        </TabActions>
      </TabBar>

      <Ribbon>
        <Group $w={118}>
          <GroupBody $pl={23}>
            <LargeButton $w={40}>
              <PasteIcon />
              <LargeLabel>Paste</LargeLabel>
              <DropHint><Chev /></DropHint>
            </LargeButton>
            <SmallStack>
              <CutIcon />
              <CopyIcon />
              <PainterIcon />
            </SmallStack>
          </GroupBody>
          <Label launcher>Clipboard</Label>
        </Group>

        <Group $w={421}>
          <GroupBody $col $pl={12} $pt={13} $gap={14}>
            <ToolRow $h={35}>
              <ComboBox $w={161}>
                <ComboText $w={138}>Calibri Light (Headings)</ComboText>
                <Chev c="#333" w={9} />
              </ComboBox>
              <ComboBox $w={64} $ml={2}>
                <ComboText $w={40}>&nbsp;16</ComboText>
                <Chev c="#333" w={9} />
              </ComboBox>
              <Tool $w={23} $ml={7}><GrowIcon /></Tool>
              <Tool $w={20} $ml={13}><GrowIcon down /></Tool>
              <Divider $ml={9} />
              <Tool $w={24} $ml={9}><ChangeCase>Aa</ChangeCase></Tool>
              <Tool $w={12} $ml={4}><Chev w={9} /></Tool>
              <Divider $ml={12} />
              <Tool $w={24} $ml={8}><ClearIcon /></Tool>
            </ToolRow>
            <ToolRow $h={34}>
              <Tool $w={20} $ml={6}><LetterBold>B</LetterBold></Tool>
              <Tool $w={20} $ml={14}><LetterItalic>I</LetterItalic></Tool>
              <Tool $w={20} $ml={13}><UnderlineGlyph /></Tool>
              <Tool $w={12} $ml={11}><Chev w={9} /></Tool>
              <Tool $w={24} $ml={12}><StrikeText>ab</StrikeText></Tool>
              <Tool $w={22} $ml={16}><ScriptBase>x<ScriptMark>2</ScriptMark></ScriptBase></Tool>
              <Tool $w={18} $ml={12}><ScriptBase>x<ScriptMark $up>2</ScriptMark></ScriptBase></Tool>
              <Divider $ml={8} />
              <Tool $w={23} $ml={8}><FillA /></Tool>
              <Tool $w={12} $ml={5}><Chev w={9} /></Tool>
              <Tool $w={24} $ml={14}><HighlightIcon /></Tool>
              <Tool $w={12} $ml={8}><Chev w={9} /></Tool>
              <Tool $w={24} $ml={12}><ColorA /></Tool>
              <Tool $w={12} $ml={8}><Chev w={9} /></Tool>
            </ToolRow>
          </GroupBody>
          <Label launcher>Font</Label>
        </Group>

        <Group $w={345}>
          <GroupBody $col $pl={16} $pt={13} $gap={14}>
            <ToolRow $h={35}>
              <Tool $w={23}><BulletsIcon /></Tool>
              <Tool $w={12} $ml={9}><Chev w={9} /></Tool>
              <Tool $w={23} $ml={11}><NumberingIcon /></Tool>
              <Tool $w={12} $ml={9}><Chev w={9} /></Tool>
              <Tool $w={23} $ml={12}><MultilevelIcon /></Tool>
              <Tool $w={12} $ml={5}><Chev w={9} /></Tool>
              <Divider $ml={12} />
              <Tool $w={22} $ml={9}><IndentIcon /></Tool>
              <Tool $w={22} $ml={12}><IndentIcon inc /></Tool>
              <Divider $ml={9} />
              <Tool $w={26} $ml={7}><SortIcon /></Tool>
              <Divider $ml={7} />
              <Tool $w={16} $ml={12}><PilcrowIcon /></Tool>
            </ToolRow>
            <ToolRow $h={34}>
              <Tool $w={22} $ml={1}><AlignIcon kind="left" /></Tool>
              <Tool $w={32} $ml={7} $active><AlignIcon kind="center" /></Tool>
              <Tool $w={22} $ml={7}><AlignIcon kind="right" /></Tool>
              <Tool $w={22} $ml={12}><AlignIcon kind="justify" /></Tool>
              <Divider $ml={9} />
              <Tool $w={24} $ml={8}><SpacingIcon /></Tool>
              <Tool $w={12} $ml={4}><Chev w={9} /></Tool>
              <Divider $ml={12} />
              <Tool $w={24} $ml={8}><ShadingIcon /></Tool>
              <Tool $w={12} $ml={8}><Chev w={9} /></Tool>
              <Tool $w={23} $ml={12}><BordersIcon /></Tool>
              <Tool $w={12} $ml={9}><Chev w={9} /></Tool>
            </ToolRow>
          </GroupBody>
          <Label launcher>Paragraph</Label>
        </Group>

        <Group $w={595}>
          <GroupBody $pt={4}>
            <Gallery>
              <GalleryItems>
                <StyleCell>
                  <StylePreview>AaBbCcD</StylePreview>
                  <StyleName>¶ Normal</StyleName>
                </StyleCell>
                <StyleCell>
                  <StylePreview><NotePreviewText>AaBbCcDdE</NotePreviewText></StylePreview>
                  <StyleName>Note</StyleName>
                </StyleCell>
                <StyleCell>
                  <NotesPreview>AaBbCcD</NotesPreview>
                  <StyleName>Notes</StyleName>
                </StyleCell>
                <StyleCell>
                  <StylePreview>AaBbCcD</StylePreview>
                  <StyleName>¶ No Spac...</StyleName>
                </StyleCell>
                <StyleCell $selected>
                  <HeadingPreview $selected>AaBbCc</HeadingPreview>
                  <StyleName $selected>Heading 1</StyleName>
                </StyleCell>
              </GalleryItems>
              <GalleryScroll>
                <ScrollStep $h={31} $off><svg width="10" height="6" viewBox="0 0 10 6" fill="none" stroke="#bbb" strokeWidth="1.400"><path d="M1 5l4-4 4 4" /></svg></ScrollStep>
                <ScrollStep $h={28}><Chev w={9} /></ScrollStep>
                <ScrollStep $h={29}><MoreGlyph><Chev w={9} /></MoreGlyph></ScrollStep>
              </GalleryScroll>
            </Gallery>
          </GroupBody>
          <Label launcher>Styles</Label>
        </Group>

        <Group $w={128}>
          <GroupBody $col $pl={14}>
            <EditRow>
              <EditIcon><Magnifier c="#444" s={23} /></EditIcon>
              Find
              <EditChev $ml={16}><Chev w={9} /></EditChev>
            </EditRow>
            <EditRow $mt={5}>
              <EditIcon><ReplaceIcon /></EditIcon>
              Replace
            </EditRow>
            <EditRow $mt={3}>
              <EditIcon><CursorIcon /></EditIcon>
              Select
              <EditChev $ml={5}><Chev w={9} /></EditChev>
            </EditRow>
          </GroupBody>
          <Label>Editing</Label>
        </Group>

        <Group $w={86}>
          <GroupBody>
            <LargeButton $w={86} $pt={4}>
              <MicIcon />
              <LargeLabel $mt={6}>Dictate</LargeLabel>
              <DropHint><Chev /></DropHint>
            </LargeButton>
          </GroupBody>
          <Label>Voice</Label>
        </Group>

        <Group $w={86}>
          <GroupBody>
            <LargeButton $w={86} $pt={4}>
              <EditorIcon />
              <LargeLabel $mt={6}>Editor</LargeLabel>
            </LargeButton>
          </GroupBody>
          <Label>Editor</Label>
        </Group>

        <Group $w={94}>
          <GroupBody>
            <LargeButton $w={94} $pt={6}>
              <AddinsIcon />
              <LargeLabel $mt={8}>Add-ins</LargeLabel>
            </LargeButton>
          </GroupBody>
          <Label>Add-ins</Label>
        </Group>

        <Collapse><CaretUp /></Collapse>
      </Ribbon>

      <Workspace>
        <DocArea>
          <Page>
            <DocTitle>Lab Notes</DocTitle>
            <DocPara $mt={43}>This is where I make notes of everything I do whilst in work.</DocPara>
            <DocPara $mt={16}>
              Since this is the first thing I see pretty much everyday I shall add some sage and uplifting advice here, at some point.
            </DocPara>
            <DocPara $mt={109} $bold>Be good to yourself. This is meant to be fun.</DocPara>
            <DocPara $mt={63} $bold>
              You can be confident, and effective, and kind, all at the same time. They’re not mutually exclusive, in fact they may be symbiotic.
            </DocPara>
            <DocPara $mt={63} $bold>Be honest about motivations. Be OK with being vulnerable.</DocPara>
          </Page>
        </DocArea>
        <Scrollbar>
          <ScrollButton $h={25}><Triangle /></ScrollButton>
          <ScrollButton $h={26} $mt={1} />
          <TrackFill />
          <ScrollButton $h={25}><Triangle $down /></ScrollButton>
        </Scrollbar>
        <TextCursor><IBeam /></TextCursor>
      </Workspace>

      <StatusBar>
        <StatusText>Page 1 of 206</StatusText>
        <StatusText $ml={27}>152703 words</StatusText>
        <StatusIcon $ml={26}><ProofIcon /></StatusIcon>
        <StatusText $ml={24}>English (United Kingdom)</StatusText>
        <StatusText $ml={26} $size={14.5}>Text Predictions: On</StatusText>
        <StatusIcon $ml={27}><PredictIcon /></StatusIcon>
        <StatusIcon $ml={24}><AccessIcon /></StatusIcon>
        <StatusText $ml={6} $bold>Accessibility: Investigate</StatusText>
        <StatusRight>
          <FocusIcon />
          <StatusText $ml={5}>Focus</StatusText>
          <StatusIcon $ml={33}><ReadIcon /></StatusIcon>
          <ViewButton><PrintIcon /></ViewButton>
          <StatusIcon $ml={19}><WebIcon /></StatusIcon>
          <ZoomSign $ml={26}>−</ZoomSign>
          <ZoomTrack><ZoomThumb /></ZoomTrack>
          <ZoomSign $ml={8}>+</ZoomSign>
          <StatusText $ml={19}>100%</StatusText>
        </StatusRight>
      </StatusBar>

      <Taskbar>
        <StartButton><WindowsLogo /></StartButton>
        <TaskSearch>
          <Magnifier c="#e6e6e6" s={25} />
          <TaskSearchText>Type here to search</TaskSearchText>
          <SearchArt><StewArt /></SearchArt>
        </TaskSearch>
        <TaskIcons>
          <TaskItem $running><ExplorerIcon /></TaskItem>
          <TaskItem $running><FirefoxIcon /></TaskItem>
          <TaskItem $running><DarkAppIcon /></TaskItem>
          <TaskItem $running><ClockApp /></TaskItem>
          <TaskItem><SlackIcon /></TaskItem>
          <TaskItem><BatteryApp /></TaskItem>
          <TaskItem><SignalIcon /></TaskItem>
          <TaskItem $active $running $ml={1}><WordIcon /></TaskItem>
        </TaskIcons>
        <Tray>
          <TrayItem $ml={0}><svg width="18" height="11" viewBox="0 0 18 11" fill="none" stroke="#fff" strokeWidth="1.200"><path d="M1 10l8-9 8 9" /></svg></TrayItem>
          <TrayItem $ml={20}><TrayCam /></TrayItem>
          <TrayItem $ml={16}><TrayBattery /></TrayItem>
          <TrayItem $ml={13}><TraySpeaker /></TrayItem>
          <TrayItem $ml={13}><TrayBox /></TrayItem>
          <TrayLang $ml={18}>ENG</TrayLang>
          <Clock>
            <span>14:09</span>
            <span>04/03/2024</span>
          </Clock>
          <TrayItem $ml={21}><NotifyIcon /></TrayItem>
        </Tray>
      </Taskbar>
    </Screen>
  );
}

export default App;
